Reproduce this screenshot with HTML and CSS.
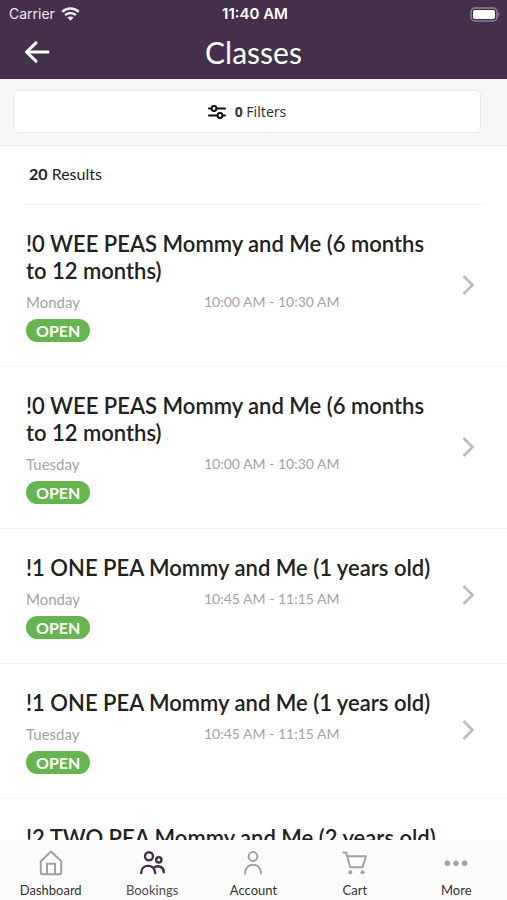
FILE: index.html
```html
<!DOCTYPE html>
<html lang="en">
<head>
<meta charset="utf-8">
<meta name="viewport" content="width=device-width, initial-scale=1">
<title>Classes</title>
<link rel="stylesheet" href="styles.css">
</head>
<body>
<svg class="defs" aria-hidden="true">
  <symbol id="chevron" viewBox="0 0 14 22"><path d="M2.5 2 L11.5 11 L2.5 20" fill="none" stroke="currentColor" stroke-width="2.5"/></symbol>
</svg>
<header class="header">
  <div class="status">
    <span class="carrier">Carrier
      <svg width="19" height="14" viewBox="0 0 19 14" aria-hidden="true"><g fill="none" stroke="currentColor" stroke-width="2.5"><path d="M1.2 4.8 C5.8 .4 13.2 .4 17.8 4.8"/><path d="M4.1 8.2 C7.1 5.3 11.9 5.3 14.9 8.2"/></g><path d="M6.4 10.6 C8.1 9 10.9 9 12.6 10.6 L9.5 13.7 Z" fill="currentColor"/></svg>
    </span>
    <span class="clock">11:40 AM</span>
    <svg class="battery" width="31" height="15" viewBox="0 0 31 15" aria-hidden="true"><rect x="1" y="1" width="26" height="13" rx="4" fill="none" stroke="#8d8196" stroke-width="1.5"/><rect x="3" y="3" width="22" height="9" rx="2" fill="#fff"/><path d="M28.5 5 Q30.5 7.5 28.5 10Z" fill="#8d8196"/></svg>
  </div>
  <div class="titlebar">
    <button class="back" type="button" aria-label="Back"><svg width="26" height="24" viewBox="0 0 26 24" aria-hidden="true"><path d="M12 2.8 L2.5 12 L12 21.2 M2.5 12 H24" fill="none" stroke="currentColor" stroke-width="3" stroke-linecap="round" stroke-linejoin="round"/></svg></button>
    <h1>Classes</h1>
  </div>
</header>
<div class="filters">
  <button class="filter-button" type="button">
    <svg width="18" height="14" viewBox="0 0 18 14" aria-hidden="true"><g fill="none" stroke="currentColor" stroke-width="2" stroke-linecap="round"><path d="M1 3.5 H3.2 M8.8 3.5 H17 M1 10.5 H9.2 M14.8 10.5 H17"/><circle cx="6" cy="3.5" r="2.4"/><circle cx="12" cy="10.5" r="2.4"/></g></svg>
    <span><b>0</b> Filters</span>
  </button>
</div>
<main class="content">
  <p class="results"><b>20</b> Results</p>
  <a class="class-row" href="#">
    <div class="info">
      <h2>!0 WEE PEAS Mommy and Me (6 months to 12 months)</h2>
      <div class="meta"><span>Monday</span><span class="time">10:00 AM - 10:30 AM</span></div>
      <span class="badge">OPEN</span>
    </div>
    <svg class="chevron" aria-hidden="true"><use href="#chevron"/></svg>
  </a>
  <a class="class-row" href="#">
    <div class="info">
      <h2>!0 WEE PEAS Mommy and Me (6 months to 12 months)</h2>
      <div class="meta"><span>Tuesday</span><span class="time">10:00 AM - 10:30 AM</span></div>
      <span class="badge">OPEN</span>
    </div>
    <svg class="chevron" aria-hidden="true"><use href="#chevron"/></svg>
  </a>
  <a class="class-row" href="#">
    <div class="info">
      <h2>!1 ONE PEA Mommy and Me (1 years old)</h2>
      <div class="meta"><span>Monday</span><span class="time">10:45 AM - 11:15 AM</span></div>
      <span class="badge">OPEN</span>
    </div>
    <svg class="chevron" aria-hidden="true"><use href="#chevron"/></svg>
  </a>
  <a class="class-row" href="#">
    <div class="info">
      <h2>!1 ONE PEA Mommy and Me (1 years old)</h2>
      <div class="meta"><span>Tuesday</span><span class="time">10:45 AM - 11:15 AM</span></div>
      <span class="badge">OPEN</span>
    </div>
    <svg class="chevron" aria-hidden="true"><use href="#chevron"/></svg>
  </a>
  <a class="class-row" href="#">
    <div class="info">
      <h2>!2 TWO PEA Mommy and Me (2 years old)</h2>
    </div>
  </a>
</main>
<nav class="tabs">
  <a href="#"><svg viewBox="0 0 28 28" aria-hidden="true"><path d="M3.8 12.2 L14 2.5 L24.2 12.2 V23.5 Q24.2 25.2 22.5 25.2 H5.5 Q3.8 25.2 3.8 23.5 Z M10 25 V14.8 H18 V25"/></svg>Dashboard</a>
  <a href="#" class="active" aria-current="page"><svg viewBox="0 0 28 28" aria-hidden="true"><circle cx="11" cy="7.2" r="4"/><circle cx="20.8" cy="10.8" r="2.7"/><path d="M3.2 24 C3.2 14.5 17.2 14.5 17.2 24 M16.5 18.2 C20.5 15.8 25.8 18 25.8 23.2"/></svg>Bookings</a>
  <a href="#"><svg viewBox="0 0 28 28" aria-hidden="true"><circle cx="14" cy="7.5" r="4.4"/><path d="M6.2 24.5 V23.5 C6.2 13.2 21.8 13.2 21.8 23.5 V24.5"/></svg>Account</a>
  <a href="#"><svg viewBox="0 0 28 28" aria-hidden="true"><path d="M2.5 3.5 H5.2 L9.2 18.3 H21.5 L25 7.3 H6.3"/><g fill="currentColor" stroke="none"><circle cx="9.3" cy="23.3" r="2"/><circle cx="21.5" cy="23.3" r="2"/></g></svg>Cart</a>
  <a href="#"><svg viewBox="0 0 28 28" aria-hidden="true"><g fill="currentColor" stroke="none"><circle cx="5.4" cy="14.3" r="2.7"/><circle cx="14" cy="14.3" r="2.7"/><circle cx="22.6" cy="14.3" r="2.7"/></g></svg>More</a>
</nav>
</body>
</html>
```
FILE: styles.css
```css
* { box-sizing: border-box; }
body {
  margin: 0;
  height: 100vh;
  display: flex;
  flex-direction: column;
  overflow: hidden;
  background: #fff;
  color: #222;
  font-family: Lato, "Noto Sans", sans-serif;
}
h1, h2, p { margin: 0; }
a { color: inherit; text-decoration: none; }
button { font: inherit; cursor: pointer; }
.defs { display: none; }

.header { background: #44304b; color: #fff; flex: none; }
.status {
  display: grid;
  grid-template-columns: 1fr auto 1fr;
  align-items: center;
  height: 28px;
  padding: 0 6px 0 9px;
  font: 14px/20px Inter, sans-serif;
}
.carrier { display: flex; align-items: center; gap: 6px; color: #eee8f0; }
.clock { font-weight: 600; font-size: 15px; }
.battery { justify-self: end; }
.titlebar {
  display: grid;
  grid-template-columns: 1fr auto 1fr;
  align-items: center;
  height: 51px;
  padding: 0 24px 3px;
}
.back {
  justify-self: start;
  display: flex;
  padding: 0;
  border: 0;
  background: none;
  color: #fff;
}
h1 { font-size: 30px; line-height: 36px; font-weight: 400; }

.filters {
  flex: none;
  padding: 11px 26px 12px 13px;
  background: #f6f6f8;
  border-bottom: 1px solid #eaeaec;
}
.filter-button {
  display: flex;
  align-items: center;
  justify-content: center;
  gap: 9px;
  width: 100%;
  height: 43px;
  border: 1px solid #e8e8ea;
  border-radius: 5px;
  background: #fff;
  color: #333;
  font: 14px/20px "Noto Sans", sans-serif;
}
.filter-button svg { color: #111; }

.content { flex: 1; min-height: 0; overflow: hidden; }
.results {
  margin: 0 21px 0 25px;
  padding: 18px 4px 20px;
  border-bottom: 1px solid #f3f3f3;
  font-size: 16px;
  line-height: 20px;
}
.class-row {
  display: flex;
  align-items: center;
  justify-content: space-between;
  padding: 25px 32px 24px 26px;
  border-bottom: 1px solid #f2f2f2;
}
.info { flex: 1; max-width: 420px; }
h2 { font-size: 22px; line-height: 27px; font-weight: 600; }
.meta {
  display: grid;
  grid-template-columns: 178px 1fr;
  margin: 9px 0 8px;
  color: #a4a4a4;
  font-size: 15px;
  line-height: 18px;
}
.time { font-size: 14px; }
.badge {
  display: block;
  width: fit-content;
  padding: 0 10px;
  border-radius: 12px;
  background: #66b550;
  color: #fff;
  font-size: 16px;
  line-height: 23px;
  font-weight: 700;
}
.chevron { flex: none; width: 14px; height: 22px; margin-bottom: 3px; color: #bbb; }

.tabs {
  flex: none;
  display: grid;
  grid-template-columns: repeat(5, 1fr);
  height: 60px;
  padding-top: 9px;
  background: #fbfbfb;
  color: #333;
  font-size: 13px;
  line-height: 16px;
}
.tabs a { display: flex; flex-direction: column; align-items: center; gap: 5px; }
.tabs svg {
  width: 28px;
  height: 28px;
  fill: none;
  stroke: currentColor;
  stroke-width: 2;
  stroke-linejoin: round;
  stroke-linecap: round;
  color: #a2a2a2;
}
.tabs .active { color: #55485c; }
.tabs .active svg { color: #44304b; stroke-width: 2.4; }
```
